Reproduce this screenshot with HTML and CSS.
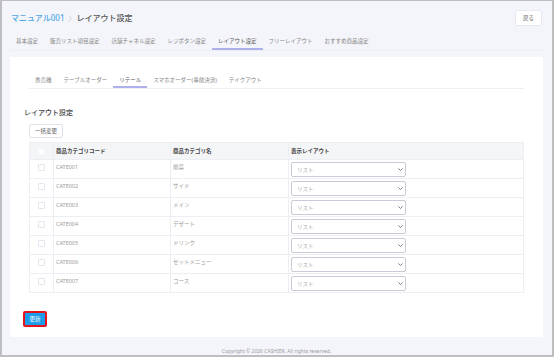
FILE: index.html
```html
<!DOCTYPE html>
<html lang="ja">
<head>
  <meta charset="UTF-8">
  <meta name="viewport" content="width=device-width, initial-scale=1.0">
  <title>レイアウト設定</title>
  <link rel="stylesheet" href="styles.css">
</head>
<body>
  <div class="page">
    <!-- Breadcrumb + back button -->
    <header class="header">
      <div class="crumbs">
        <span class="crumb-link">マニュアル001</span>
        <svg class="crumb-sep" width="4" height="7" viewBox="0 0 4 7"><path d="M0.5 0.5 L3.5 3.5 L0.5 6.5" fill="none" stroke="#c9cacf" stroke-width="0.8"/></svg>
        <span class="crumb-current">レイアウト設定</span>
      </div>
      <button class="btn-back">戻る</button>
    </header>

    <nav class="tabs">
      <span class="tab">基本設定</span>
      <span class="tab">販売リスト項目設定</span>
      <span class="tab">店舗チャネル設定</span>
      <span class="tab">レジボタン設定</span>
      <span class="tab active">レイアウト設定</span>
      <span class="tab">フリーレイアウト</span>
      <span class="tab">おすすめ商品設定</span>
    </nav>

    <main class="card">
      <nav class="subtabs">
        <span class="subtab">券売機</span>
        <span class="subtab">テーブルオーダー</span>
        <span class="subtab active">リテール</span>
        <span class="subtab">スマホオーダー(事前決済)</span>
        <span class="subtab">テイクアウト</span>
      </nav>

      <h2 class="section-title">レイアウト設定</h2>
      <button class="btn-bulk">一括変更</button>

      <table class="layout-table">
        <colgroup>
          <col class="col-check">
          <col class="col-code">
          <col class="col-name">
          <col>
        </colgroup>
        <thead>
          <tr>
            <th class="check"><span class="checkbox"></span></th>
            <th>商品カテゴリコード</th>
            <th>商品カテゴリ名</th>
            <th>表示レイアウト</th>
          </tr>
        </thead>
        <tbody>
          <tr>
            <td class="check"><span class="checkbox"></span></td>
            <td>CATE001</td>
            <td>前菜</td>
            <td class="layout"><div class="select"><span>リスト</span><svg width="5" height="3" viewBox="0 0 5 3"><path d="M0.4 0.4 L2.5 2.5 L4.6 0.4" fill="none" stroke="#5a6070" stroke-width="0.8"/></svg></div></td>
          </tr>
          <tr>
            <td class="check"><span class="checkbox"></span></td>
            <td>CATE002</td>
            <td>サイド</td>
            <td class="layout"><div class="select"><span>リスト</span><svg width="5" height="3" viewBox="0 0 5 3"><path d="M0.4 0.4 L2.5 2.5 L4.6 0.4" fill="none" stroke="#5a6070" stroke-width="0.8"/></svg></div></td>
          </tr>
          <tr>
            <td class="check"><span class="checkbox"></span></td>
            <td>CATE003</td>
            <td>メイン</td>
            <td class="layout"><div class="select"><span>リスト</span><svg width="5" height="3" viewBox="0 0 5 3"><path d="M0.4 0.4 L2.5 2.5 L4.6 0.4" fill="none" stroke="#5a6070" stroke-width="0.8"/></svg></div></td>
          </tr>
          <tr>
            <td class="check"><span class="checkbox"></span></td>
            <td>CATE004</td>
            <td>デザート</td>
            <td class="layout"><div class="select"><span>リスト</span><svg width="5" height="3" viewBox="0 0 5 3"><path d="M0.4 0.4 L2.5 2.5 L4.6 0.4" fill="none" stroke="#5a6070" stroke-width="0.8"/></svg></div></td>
          </tr>
          <tr>
            <td class="check"><span class="checkbox"></span></td>
            <td>CATE005</td>
            <td>ドリンク</td>
            <td class="layout"><div class="select"><span>リスト</span><svg width="5" height="3" viewBox="0 0 5 3"><path d="M0.4 0.4 L2.5 2.5 L4.6 0.4" fill="none" stroke="#5a6070" stroke-width="0.8"/></svg></div></td>
          </tr>
          <tr>
            <td class="check"><span class="checkbox"></span></td>
            <td>CATE006</td>
            <td>セットメニュー</td>
            <td class="layout"><div class="select"><span>リスト</span><svg width="5" height="3" viewBox="0 0 5 3"><path d="M0.4 0.4 L2.5 2.5 L4.6 0.4" fill="none" stroke="#5a6070" stroke-width="0.8"/></svg></div></td>
          </tr>
          <tr>
            <td class="check"><span class="checkbox"></span></td>
            <td>CATE007</td>
            <td>コース</td>
            <td class="layout"><div class="select"><span>リスト</span><svg width="5" height="3" viewBox="0 0 5 3"><path d="M0.4 0.4 L2.5 2.5 L4.6 0.4" fill="none" stroke="#5a6070" stroke-width="0.8"/></svg></div></td>
          </tr>
        </tbody>
      </table>

      <button class="btn-update">更新</button>
    </main>

    <footer class="footer">Copyright © 2026 CASHIER. All rights reserved.</footer>
  </div>
</body>
</html>
```

FILE: styles.css
```css
/* General */
* {
  box-sizing: border-box;
}

body {
  margin: 0;
  font-family: "Noto Sans", "Noto Sans CJK JP", sans-serif;
  background: #fff;
}

.page {
  height: 357px;
  display: flex;
  flex-direction: column;
  padding: 0 9px 0 8px;
  background: #f4f5fa;
  border: solid #bdbdc2;
  border-width: 1px 2px 2px 2px;
}

/* Header */
.header {
  display: flex;
  justify-content: space-between;
  align-items: center;
  padding: 9px 0 0 1px;
}

.crumbs {
  display: flex;
  align-items: center;
  font-size: 8px;
  line-height: 16px;
  font-weight: 500;
}

.crumb-link {
  color: #4ea6e4;
}

.crumb-sep {
  margin: 0 5px 0 3px;
}

.crumb-current {
  color: #555;
}

.btn-back {
  width: 27px;
  height: 16px;
  margin-right: 1px;
  padding: 0;
  background: #fff;
  border: 1px solid #e6e9f1;
  border-radius: 2px;
  font-family: inherit;
  font-size: 5.5px;
  color: #666;
}

/* Tabs */
.tabs,
.subtabs {
  display: flex;
  border-bottom: 1px solid #eceef4;
}

.tab,
.subtab {
  padding: 11px 6px 3px;
  font-size: 5.5px;
  line-height: 8px;
  color: #858585;
  white-space: nowrap;
  border-bottom: 2px solid transparent;
}

.subtab {
  padding: 4px 6px 2px;
}

.tab.active,
.subtab.active {
  color: #555;
  border-bottom-color: #aeb0ec;
}

/* Card */
.card {
  margin-top: 6px;
  padding: 15px 14px 10px;
  background: #fff;
}

.subtabs {
  margin: 0 5px;
}

.section-title {
  margin: 19px 0 0;
  font-size: 7px;
  line-height: 10px;
  font-weight: 500;
  color: #444;
}

.btn-bulk {
  display: block;
  height: 14px;
  margin: 6px 0 0 5px;
  padding: 0 5px;
  background: #fff;
  border: 1px solid #dfe3ec;
  border-radius: 2px;
  font-family: inherit;
  font-size: 5.5px;
  color: #555;
}

/* Table */
.layout-table {
  width: calc(100% - 10px);
  margin: 4px 5px 0;
  border-collapse: collapse;
  table-layout: fixed;
}

.col-check {
  width: 24px;
}

.col-code {
  width: 117px;
}

.col-name {
  width: 118px;
}

.layout-table th {
  height: 17px;
  padding: 0 2px;
  background: #f4f5f7;
  border: 1px solid #eceef4;
  font-size: 5.5px;
  font-weight: 700;
  color: #444;
  text-align: left;
}

.layout-table td {
  height: 19px;
  padding: 3px 2px 0;
  border: 1px solid #eceef4;
  vertical-align: top;
  font-size: 5.5px;
  line-height: 8px;
  color: #9a9a9a;
}

.layout-table .check {
  padding-left: 8px;
}

.checkbox {
  display: block;
  width: 7px;
  height: 7px;
  background: #fff;
  border: 1px solid #e3e6ee;
  border-radius: 1px;
}

.layout-table td .checkbox {
  margin-top: 1px;
}

.layout-table th .checkbox {
  border-color: #f4f5f7;
}

.layout-table td.layout {
  padding-top: 2px;
}

.select {
  display: flex;
  align-items: center;
  justify-content: space-between;
  width: 115px;
  height: 15px;
  padding: 0 2px 0 5px;
  border: 1px solid #c9cbd9;
  border-radius: 2px;
  color: #aaa;
}

/* Update button */
.btn-update {
  display: block;
  width: 24px;
  height: 16px;
  margin: 18px 0 0 -1px;
  padding: 0;
  background: #1c9ce9;
  border: 2px solid #e3141b;
  border-radius: 2px;
  font-family: inherit;
  font-size: 5.5px;
  color: #fff;
}

/* Footer */
.footer {
  margin-top: auto;
  text-align: center;
  font-size: 5px;
  line-height: 7px;
  color: #9a9a9a;
}
```
